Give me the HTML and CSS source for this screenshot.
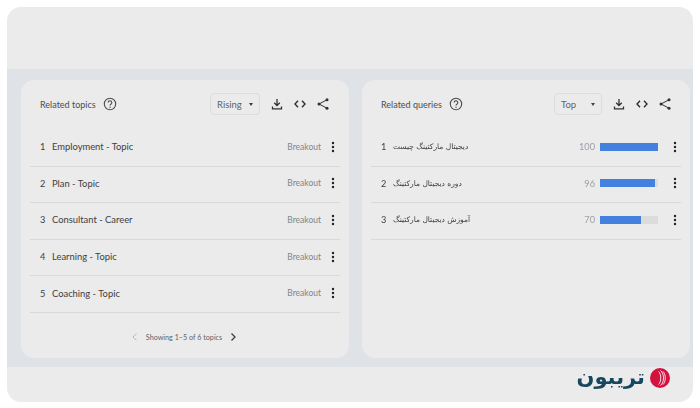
FILE: index.html
```html
<!DOCTYPE html>
<html lang="en">
<head>
<meta charset="utf-8">
<title>Related topics and queries</title>
<link rel="stylesheet" href="styles.css">
</head>
<body>
<svg class="sprites" width="0" height="0" aria-hidden="true">
  <defs>
    <symbol id="i-help" viewBox="0 0 14 14"><circle cx="7" cy="7" r="5.7" fill="none" stroke="currentColor" stroke-width="1.1"/><path d="M5.2 5.6a1.8 1.8 0 1 1 2.9 1.4c-.7.5-1.1.8-1.1 1.6" fill="none" stroke="currentColor" stroke-width="1.1"/><circle cx="7" cy="10.2" r=".7" fill="currentColor"/></symbol>
    <symbol id="i-down" viewBox="0 0 14 14"><path d="M7 2v6.500M4.200 5.700 7 8.500l2.800-2.800M2.500 9.500v2.300h9V9.500" fill="none" stroke="currentColor" stroke-width="1.300"/></symbol>
    <symbol id="i-code" viewBox="0 0 14 14"><path d="M5 3.800 2 7l3 3.200M9 3.800 12 7l-3 3.200" fill="none" stroke="currentColor" stroke-width="1.400"/></symbol>
    <symbol id="i-share" viewBox="0 0 14 14"><path d="M11 2.800 3 7l8 4.200" fill="none" stroke="currentColor" stroke-width="1"/><circle cx="11" cy="2.800" r="1.500" fill="currentColor"/><circle cx="3" cy="7" r="1.500" fill="currentColor"/><circle cx="11" cy="11.200" r="1.500" fill="currentColor"/></symbol>
    <symbol id="i-more" viewBox="0 0 4 12"><circle cx="2" cy="2" r="1.200" fill="currentColor"/><circle cx="2" cy="6" r="1.200" fill="currentColor"/><circle cx="2" cy="10" r="1.200" fill="currentColor"/></symbol>
  </defs>
</svg>
<main class="frame">
  <div class="band-top"></div>
  <section class="band-mid">
    <article class="card">
      <header class="card-head">
        <h2 class="title">Related topics</h2>
        <svg class="help"><use href="#i-help"/></svg>
        <div class="select select-rising"><span>Rising</span><i class="caret"></i></div>
        <div class="tools">
          <svg class="tool"><use href="#i-down"/></svg>
          <svg class="tool"><use href="#i-code"/></svg>
          <svg class="tool"><use href="#i-share"/></svg>
        </div>
      </header>
      <ul class="rows">
        <li class="row"><span class="num">1</span><span class="label">Employment - Topic</span><span class="status">Breakout</span><svg class="more"><use href="#i-more"/></svg></li>
        <li class="row"><span class="num">2</span><span class="label">Plan - Topic</span><span class="status">Breakout</span><svg class="more"><use href="#i-more"/></svg></li>
        <li class="row"><span class="num">3</span><span class="label">Consultant - Career</span><span class="status">Breakout</span><svg class="more"><use href="#i-more"/></svg></li>
        <li class="row"><span class="num">4</span><span class="label">Learning - Topic</span><span class="status">Breakout</span><svg class="more"><use href="#i-more"/></svg></li>
        <li class="row"><span class="num">5</span><span class="label">Coaching - Topic</span><span class="status">Breakout</span><svg class="more"><use href="#i-more"/></svg></li>
      </ul>
      <footer class="pager">
        <svg class="chev chev-off" viewBox="0 0 8 10"><path d="M5.500 1.500 2 5l3.500 3.500" fill="none" stroke="currentColor" stroke-width="1"/></svg>
        <span>Showing 1–5 of 6 topics</span>
        <svg class="chev" viewBox="0 0 8 10"><path d="M2.500 1.500 6 5 2.500 8.500" fill="none" stroke="currentColor" stroke-width="1.300"/></svg>
      </footer>
    </article>
    <article class="card card-queries">
      <header class="card-head">
        <h2 class="title">Related queries</h2>
        <svg class="help"><use href="#i-help"/></svg>
        <div class="select select-top"><span>Top</span><i class="caret"></i></div>
        <div class="tools">
          <svg class="tool"><use href="#i-down"/></svg>
          <svg class="tool"><use href="#i-code"/></svg>
          <svg class="tool"><use href="#i-share"/></svg>
        </div>
      </header>
      <ul class="rows">
        <li class="row"><span class="num">1</span><span class="label fa" dir="rtl">دیجیتال مارکتینگ چیست</span><span class="value">100</span><span class="track"><span class="fill" style="width:100%"></span></span><svg class="more"><use href="#i-more"/></svg></li>
        <li class="row"><span class="num">2</span><span class="label fa" dir="rtl">دوره دیجیتال مارکتینگ</span><span class="value">96</span><span class="track"><span class="fill" style="width:95%"></span></span><svg class="more"><use href="#i-more"/></svg></li>
        <li class="row"><span class="num">3</span><span class="label fa" dir="rtl">آموزش دیجیتال مارکتینگ</span><span class="value">70</span><span class="track"><span class="fill" style="width:70%"></span></span><svg class="more"><use href="#i-more"/></svg></li>
      </ul>
    </article>
  </section>
  <div class="band-bottom">
    <span class="logo-text" dir="rtl" lang="fa">تریبون</span>
    <svg class="logo-mark" viewBox="0 0 20 20" aria-hidden="true">
      <circle cx="10" cy="10" r="10" fill="#d3123f"/>
      <path d="M8.500 3.500c3 2.500 3 10.500 0 13M10.500 2.500c4 3.500 4 11.500 0 15M13 3.500c3 3 3 10 0 13" fill="none" stroke="#f6e3e6" stroke-width="1"/>
    </svg>
  </div>
</main>
</body>
</html>
```
FILE: styles.css
```css
* { box-sizing: border-box; }
html, body { height: 100%; }
body {
  margin: 0;
  background: #fff;
  font-family: "Lato", "Liberation Sans", sans-serif;
  color: #3c4043;
  overflow: hidden;
}
.sprites { position: absolute; }
.frame {
  margin: 7px 7px 0;
  height: 395px;
  border-radius: 14px;
  overflow: hidden;
  background: #ebebeb;
  display: flex;
  flex-direction: column;
  filter: blur(0.3px);
}
.band-top { height: 62px; flex: none; }
.band-mid {
  height: 298px;
  flex: none;
  background: #dfe3e8;
  padding: 11px 3px 9px 14px;
  display: flex;
  gap: 13px;
}
.band-bottom {
  flex: 1;
  display: flex;
  align-items: center;
  justify-content: flex-end;
  gap: 5px;
  padding: 0 23px 15px 0;
}
.card {
  width: 328px;
  height: 278px;
  background: #ebebeb;
  border-radius: 13px;
  display: flex;
  flex-direction: column;
}
.card-head {
  height: 50px;
  flex: none;
  display: flex;
  align-items: center;
  padding: 0 19px 2px;
}
.card-queries .card-head { padding-right: 18px; }
.title { margin: 0; font-size: 9px; font-weight: 400; color: #4a4d50; }
.help { width: 14px; height: 14px; margin-left: 7px; color: #4a4d50; }
.select {
  margin-left: auto;
  height: 22px;
  border: 1px solid #dcdcdc;
  border-radius: 4px;
  display: flex;
  align-items: center;
  justify-content: space-between;
  font-size: 9.5px;
  color: #5f6368;
  padding: 0 6px;
}
.select-rising { width: 50px; }
.select-top { width: 48px; }
.caret {
  width: 0; height: 0;
  border: 2.5px solid transparent;
  border-top: 3px solid #3c4043;
  border-bottom: 0;
}
.tools { display: flex; gap: 9px; margin-left: 10px; color: #2f3235; }
.tool { width: 14px; height: 14px; }
.rows { list-style: none; margin: 0; padding: 0 9px; }
.row {
  height: 36.6px;
  display: flex;
  align-items: center;
  border-bottom: 1px solid #d9d9d9;
  padding: 0 5px 2px 10px;
  font-size: 9.4px;
}
.card-queries .row { padding-right: 4px; }
.num { width: 12px; flex: none; color: #3c4043; font-size: 9.2px; }
.label { color: #3c4043; }
.fa { font-family: "DejaVu Sans", sans-serif; font-size: 7.5px; white-space: nowrap; }
.status { margin-left: auto; font-size: 8.5px; color: #80868b; }
.value { margin-left: auto; font-size: 9.2px; color: #9aa0a6; }
.track { width: 58px; height: 8px; margin-left: 5px; background: #dcdcdc; display: block; }
.fill { display: block; height: 100%; background: #4480de; }
.more { width: 4px; height: 12px; margin-left: 10px; color: #202124; flex: none; }
.track + .more { margin-left: 15px; }
.pager {
  flex: 1;
  display: flex;
  align-items: center;
  justify-content: center;
  gap: 7px;
  font-size: 7.2px;
  color: #5f6368;
  padding: 4px 2px 0 0;
}
.chev { width: 8px; height: 10px; color: #3c4043; }
.chev-off { color: #b5b9bd; }
.logo-text {
  font-family: "DejaVu Sans", sans-serif;
  font-weight: 700;
  font-size: 21px;
  line-height: 1;
  color: #16475f;
}
.logo-mark { width: 20px; height: 20px; }
```
